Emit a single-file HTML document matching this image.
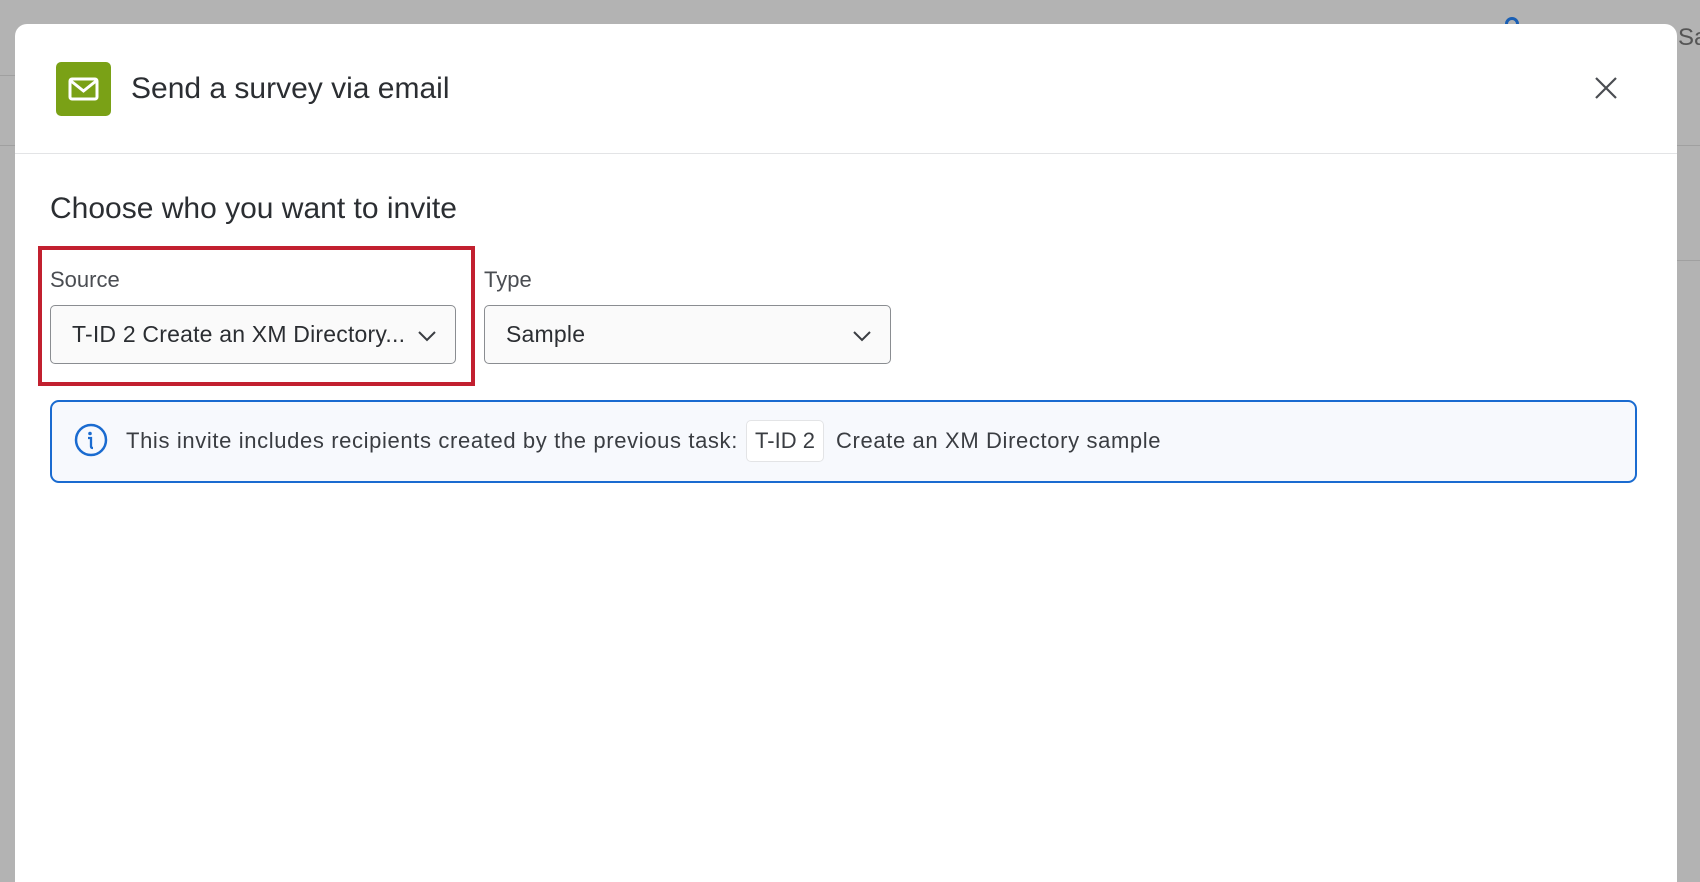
<!DOCTYPE html>
<html><head><meta charset="utf-8"><style>
*{box-sizing:border-box;margin:0;padding:0}
html,body{width:1700px;height:882px;overflow:hidden}
body{background:#b3b3b3;font-family:"Liberation Sans",sans-serif;color:#32363a;position:relative}
.abs{position:absolute}
.modal{left:15px;top:24px;width:1662px;height:858px;background:#fff;border-radius:12px 12px 0 0}
.sel{position:absolute;top:305px;height:59px;border:1.5px solid #8a8d91;border-radius:5px;background:#fafafa;font-size:23px;letter-spacing:0.2px;line-height:56px;padding-left:21px;color:#2b2e32;white-space:nowrap}
.sel svg{position:absolute;right:18px;top:20px}
</style></head><body>
<div class="abs" style="left:0;top:75px;width:15px;height:1px;background:#a0a0a0"></div>
<div class="abs" style="left:0;top:145px;width:15px;height:1px;background:#a0a0a0"></div>
<div class="abs" style="left:1677px;top:145px;width:23px;height:1px;background:#a0a0a0"></div>
<div class="abs" style="left:1677px;top:260px;width:23px;height:1px;background:#a0a0a0"></div>
<div class="abs" style="left:1678px;top:24px;font-size:24px;color:#555">Sa</div>
<div class="abs" style="left:1505px;top:17px;width:14px;height:14px;border:3px solid #1a5fb4;border-radius:50%"></div>
<div class="abs modal"></div>
<div class="abs" style="left:15px;top:153px;width:1662px;height:1px;background:#e3e4e6"></div>
<div class="abs" style="left:56px;top:62px;width:55px;height:54px;background:#7aa116;border-radius:5px">
<svg width="55" height="54" viewBox="0 0 55 54"><rect x="14" y="17" width="27" height="20" rx="2" fill="none" stroke="#fff" stroke-width="3"/><path d="M15 19 L27.5 29 L40 19" fill="none" stroke="#fff" stroke-width="3"/></svg></div>
<div class="abs" style="left:131px;top:72px;font-size:30px;color:#2b2e32">Send a survey via email</div>
<svg class="abs" style="left:1594px;top:76px" width="24" height="24" viewBox="0 0 24 24"><path d="M2 2L22 22M22 2L2 22" stroke="#4a4d52" stroke-width="2.2"/></svg>
<div class="abs" style="left:50px;top:192px;font-size:30px;color:#2b2e32;white-space:nowrap">Choose who you want to invite</div>
<div class="abs" style="left:38px;top:246px;width:437px;height:140px;border:4px solid #c2202f"></div>
<div class="abs" style="left:50px;top:267px;font-size:22px;color:#4a4d52">Source</div>
<div class="abs" style="left:484px;top:267px;font-size:22px;color:#4a4d52">Type</div>
<div class="sel" style="left:50px;width:406px">T-ID 2 Create an XM Directory...<svg width="20" height="20" viewBox="0 0 20 20"><path d="M2 6L10 14L18 6" fill="none" stroke="#3a3d42" stroke-width="2"/></svg></div>
<div class="sel" style="left:484px;width:407px">Sample<svg width="20" height="20" viewBox="0 0 20 20"><path d="M2 6L10 14L18 6" fill="none" stroke="#3a3d42" stroke-width="2"/></svg></div>
<div class="abs" style="left:50px;top:400px;width:1587px;height:83px;border:2px solid #1a6bd0;border-radius:9px;background:#f7f9fd"></div>
<svg class="abs" style="left:74px;top:423px" width="34" height="34" viewBox="0 0 34 34"><circle cx="17" cy="17" r="15" fill="none" stroke="#1a6bd0" stroke-width="2.5"/><circle cx="16" cy="10.5" r="1.8" fill="#1a6bd0"/><path d="M14 15h3v8.5q0 1.5 2 1.5" fill="none" stroke="#1a6bd0" stroke-width="2.3"/></svg>
<div class="abs" style="left:126px;top:428px;font-size:22px;letter-spacing:0.63px;color:#3a3d42;white-space:nowrap">This invite includes recipients created by the previous task:</div>
<div class="abs" style="left:746px;top:420px;width:78px;height:42px;border:1px solid #e3e4e6;border-radius:5px;background:#fff;font-size:22px;line-height:40px;text-align:center;color:#3a3d42">T-ID 2</div>
<div class="abs" style="left:836px;top:428px;font-size:22px;letter-spacing:0.63px;color:#3a3d42;white-space:nowrap">Create an XM Directory sample</div>
</body></html>
